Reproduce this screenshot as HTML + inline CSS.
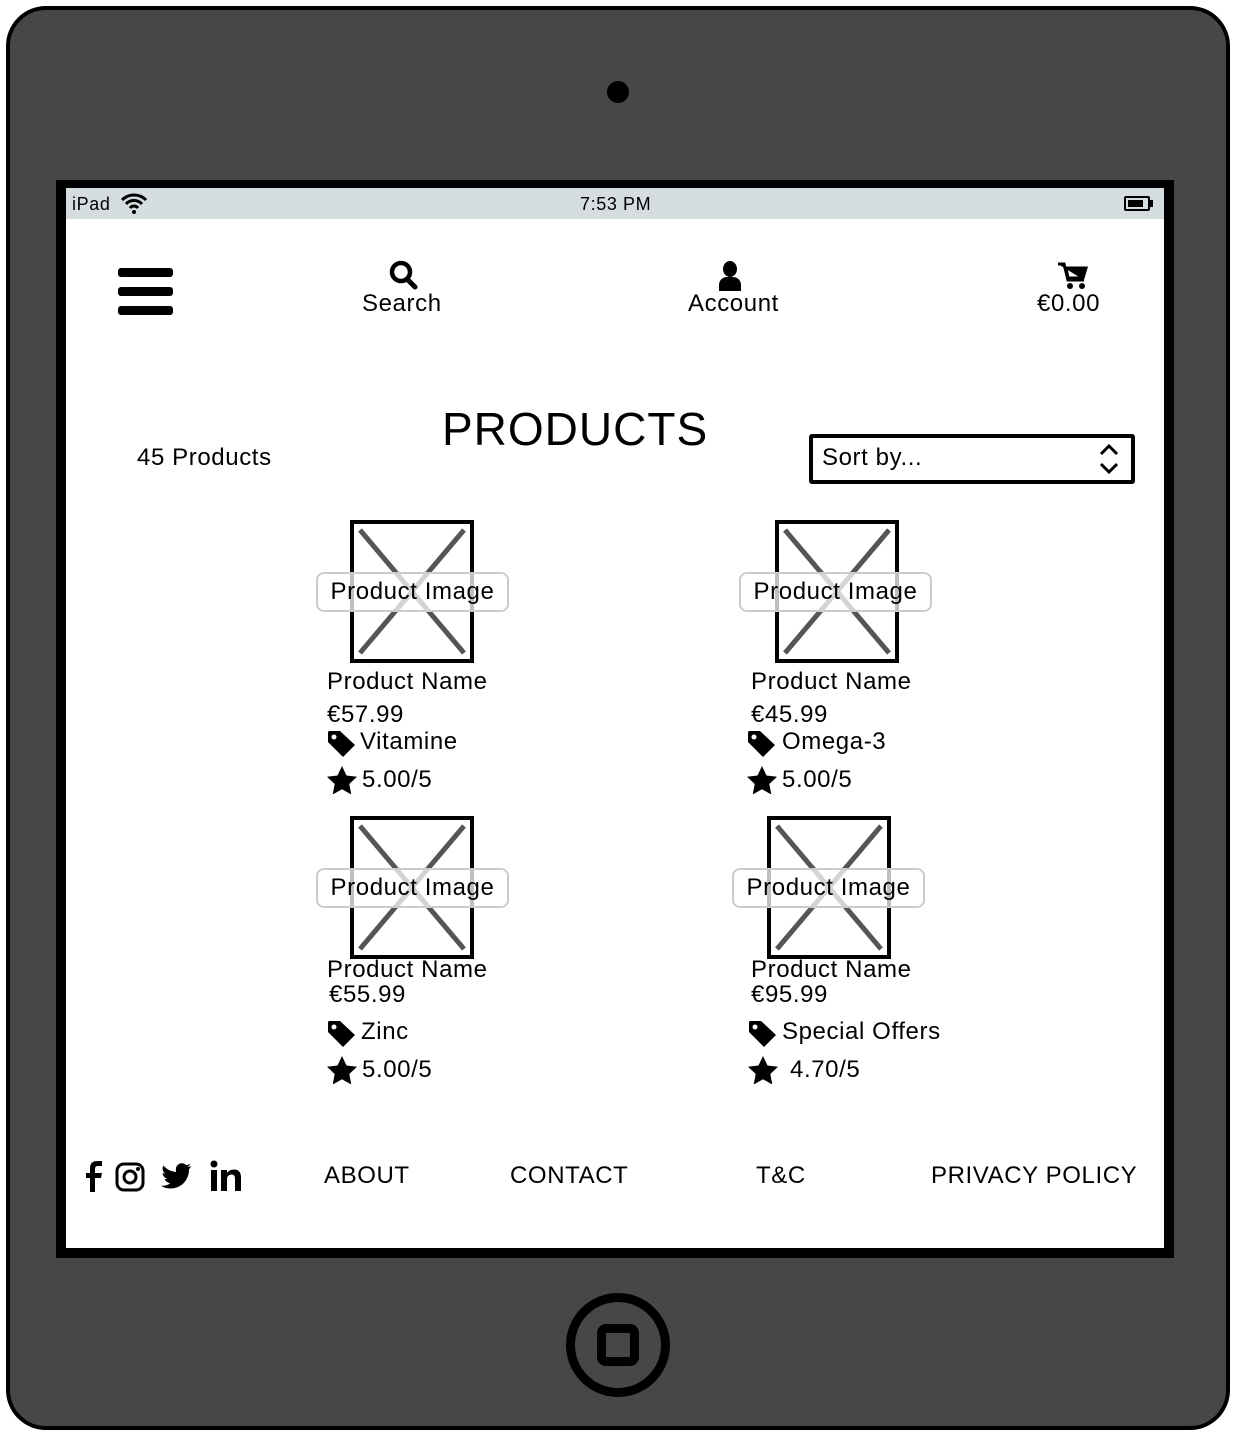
<!DOCTYPE html>
<html><head><meta charset="utf-8"><style>
*{margin:0;padding:0;box-sizing:border-box}
body{width:1236px;height:1436px;background:#fff;position:relative;overflow:hidden;font-family:"Liberation Sans",sans-serif;color:#000}
.a{position:absolute}
.t{position:absolute;font-size:24px;line-height:26px;white-space:nowrap;letter-spacing:0.6px}
.img{position:absolute;width:124px;height:143px;border:4px solid #000;background:#fff}
.lbl{position:absolute;width:193px;height:40px;border:2px solid #ccc;border-radius:8px;background:rgba(255,255,255,.75);font-size:24px;line-height:36px;text-align:center;letter-spacing:0.6px}
</style></head><body>
<div class="a" style="left:6px;top:6px;width:1224px;height:1424px;background:#474747;border:4px solid #000;border-radius:40px"></div>
<div class="a" style="left:607px;top:81px;width:22px;height:22px;border-radius:50%;background:#000"></div>
<div class="a" style="left:56px;top:180px;width:1118px;height:1078px;background:#000"></div>
<div class="a" style="left:66px;top:188px;width:1098px;height:1060px;background:#fff"></div>
<div class="a" style="left:66px;top:188px;width:1098px;height:31px;background:#d6dde1"></div>
<div class="t" style="left:72px;top:191px;font-size:18px">iPad</div>
<svg class="a" style="left:120px;top:193px" width="28" height="22" viewBox="0 0 28 22"><path d="M2 7a17 17 0 0 1 24 0M6 11a11 11 0 0 1 16 0M10 15a5 5 0 0 1 8 0" fill="none" stroke="#000" stroke-width="3"/><circle cx="14" cy="19" r="2"/></svg>
<div class="t" style="left:580px;top:191px;font-size:18px">7:53 PM</div>
<div class="a" style="left:1124px;top:196px;width:26px;height:15px;border:2px solid #000;border-radius:2px"><div style="margin:2px;width:15px;height:7px;background:#000"></div></div>
<div class="a" style="left:1150px;top:200px;width:3px;height:7px;background:#000"></div>
<!-- header -->
<div class="a" style="left:118px;top:268px;width:55px;height:9px;background:#000;border-radius:3px"></div>
<div class="a" style="left:118px;top:287px;width:55px;height:9px;background:#000;border-radius:3px"></div>
<div class="a" style="left:118px;top:306px;width:55px;height:9px;background:#000;border-radius:3px"></div>
<svg class="a" style="left:388px;top:260px" width="32" height="30" viewBox="0 0 32 30"><circle cx="13" cy="12" r="9" fill="none" stroke="#000" stroke-width="4.5"/><path d="M19 19l8 8" stroke="#000" stroke-width="5" stroke-linecap="round"/></svg>
<div class="t" style="left:362px;top:291px">Search</div>
<svg class="a" style="left:717px;top:261px" width="26" height="30" viewBox="0 0 26 30"><ellipse cx="13" cy="8" rx="7" ry="8"/><path d="M2 30v-6c0-5 4-8 8-8h6c4 0 8 3 8 8v6z"/></svg>
<div class="t" style="left:688px;top:291px">Account</div>
<svg class="a" style="left:1058px;top:262px" width="30" height="28" viewBox="0 0 30 28"><path d="M0 2h6l4 16h16M8 6h20l-3 10H10z" stroke="#000" stroke-width="3" fill="#000"/><circle cx="12" cy="24" r="3"/><circle cx="24" cy="24" r="3"/></svg>
<div class="t" style="left:1037px;top:291px">€0.00</div>
<!-- title -->
<div class="t" style="left:442px;top:404px;font-size:46px;line-height:50px;letter-spacing:1px">PRODUCTS</div>
<div class="t" style="left:137px;top:445px">45 Products</div>
<div class="a" style="left:809px;top:434px;width:326px;height:50px;border:4px solid #000;border-radius:3px"></div>
<div class="t" style="left:822px;top:445px">Sort by...</div>
<svg class="a" style="left:1098px;top:443px" width="22" height="32" viewBox="0 0 22 32"><path d="M3 11l8-8 8 8M3 21l8 8 8-8" fill="none" stroke="#000" stroke-width="3"/></svg>

<!-- cards -->
<svg width="0" height="0" style="position:absolute"><defs>
<symbol id="x" viewBox="0 0 116 135"><path d="M6 6l104 123M110 6L6 129" stroke="#555" stroke-width="5"/></symbol>
<symbol id="tag" viewBox="0 0 30 28"><path d="M1 2v10l15 15 12-12L13 1H2z"/><circle cx="7" cy="7" r="2.5" fill="#fff"/></symbol>
<symbol id="star" viewBox="0 0 30 28"><path d="M15 0l4.5 9.5 10.5 1.3-7.7 7.2 2 10.5L15 23.3 5.7 28.5l2-10.5L0 10.8l10.5-1.3z"/></symbol>
</defs></svg>

<div class="img" style="left:350px;top:520px"><svg width="116" height="135"><use href="#x"/></svg></div>
<div class="lbl" style="left:316px;top:572px">Product Image</div>
<div class="t" style="left:327px;top:669px">Product Name</div>
<div class="t" style="left:327px;top:702px">€57.99</div>
<svg class="a" style="left:327px;top:730px" width="30" height="28"><use href="#tag"/></svg>
<div class="t" style="left:360px;top:729px">Vitamine</div>
<svg class="a" style="left:327px;top:766px" width="30" height="28"><use href="#star"/></svg>
<div class="t" style="left:362px;top:767px">5.00/5</div>

<div class="img" style="left:775px;top:520px"><svg width="116" height="135"><use href="#x"/></svg></div>
<div class="lbl" style="left:739px;top:572px">Product Image</div>
<div class="t" style="left:751px;top:669px">Product Name</div>
<div class="t" style="left:751px;top:702px">€45.99</div>
<svg class="a" style="left:747px;top:730px" width="30" height="28"><use href="#tag"/></svg>
<div class="t" style="left:782px;top:729px">Omega-3</div>
<svg class="a" style="left:747px;top:766px" width="30" height="28"><use href="#star"/></svg>
<div class="t" style="left:782px;top:767px">5.00/5</div>

<div class="img" style="left:350px;top:816px"><svg width="116" height="135"><use href="#x"/></svg></div>
<div class="lbl" style="left:316px;top:868px">Product Image</div>
<div class="t" style="left:327px;top:957px">Product Name</div>
<div class="t" style="left:329px;top:982px">€55.99</div>
<svg class="a" style="left:327px;top:1020px" width="30" height="28"><use href="#tag"/></svg>
<div class="t" style="left:361px;top:1019px">Zinc</div>
<svg class="a" style="left:327px;top:1056px" width="30" height="28"><use href="#star"/></svg>
<div class="t" style="left:362px;top:1057px">5.00/5</div>

<div class="img" style="left:767px;top:816px"><svg width="116" height="135"><use href="#x"/></svg></div>
<div class="lbl" style="left:732px;top:868px">Product Image</div>
<div class="t" style="left:751px;top:957px">Product Name</div>
<div class="t" style="left:751px;top:982px">€95.99</div>
<svg class="a" style="left:748px;top:1020px" width="30" height="28"><use href="#tag"/></svg>
<div class="t" style="left:782px;top:1019px">Special Offers</div>
<svg class="a" style="left:748px;top:1056px" width="30" height="28"><use href="#star"/></svg>
<div class="t" style="left:790px;top:1057px">4.70/5</div>

<!-- footer -->
<svg class="a" style="left:84px;top:1160px" width="20" height="32" viewBox="0 0 20 32"><path d="M6 32V18H2v-5h4V8c0-5 3-7 7-7h5v5h-4c-2 0-3 1-3 3v4h7l-1 5h-6v14z"/></svg>
<svg class="a" style="left:115px;top:1162px" width="30" height="30" viewBox="0 0 30 30"><rect x="2" y="2" width="26" height="26" rx="7" fill="none" stroke="#000" stroke-width="3"/><circle cx="15" cy="15" r="6" fill="none" stroke="#000" stroke-width="3"/><circle cx="23" cy="7" r="2"/></svg>
<svg class="a" style="left:160px;top:1163px" width="32" height="27" viewBox="0 0 32 27"><path d="M31 3c-1 .5-2.5 1-3.5 1 1.2-.8 2.2-2 2.6-3.3-1.2.7-2.5 1.2-3.8 1.5A6 6 0 0 0 16 7.5c0 .5 0 1 .1 1.4C11 8.6 6.5 6.2 3.4 2.5c-.5.9-.8 2-.8 3 0 2.2 1.1 4 2.8 5.1-1 0-2-.3-2.8-.8 0 3 2.1 5.4 4.9 6-.9.3-2 .3-2.9.1.8 2.4 3 4.1 5.7 4.2A12.5 12.5 0 0 1 1 22.7C3.8 24.5 7 25.5 10.5 25.5c12 0 18.5-10 18.5-18.5v-.8C30 5.5 30.5 4.3 31 3z"/></svg>
<svg class="a" style="left:210px;top:1160px" width="32" height="31" viewBox="0 0 32 31"><circle cx="4" cy="4" r="3.5"/><rect x="1" y="10" width="6" height="21"/><path d="M11 10h6v3c1.5-2 3.5-3.5 7-3.5 5 0 7 3 7 8v13.5h-6V19c0-3-1-4.5-3.5-4.5S17 16.5 17 19v12h-6z"/></svg>
<div class="t" style="left:324px;top:1163px">ABOUT</div>
<div class="t" style="left:510px;top:1163px">CONTACT</div>
<div class="t" style="left:756px;top:1163px">T&amp;C</div>
<div class="t" style="left:931px;top:1163px">PRIVACY POLICY</div>

<!-- home button -->
<div class="a" style="left:566px;top:1293px;width:104px;height:104px;border:9px solid #000;border-radius:50%"></div>
<div class="a" style="left:597px;top:1324px;width:42px;height:42px;border:9px solid #000;border-radius:9px"></div>
</body></html>
